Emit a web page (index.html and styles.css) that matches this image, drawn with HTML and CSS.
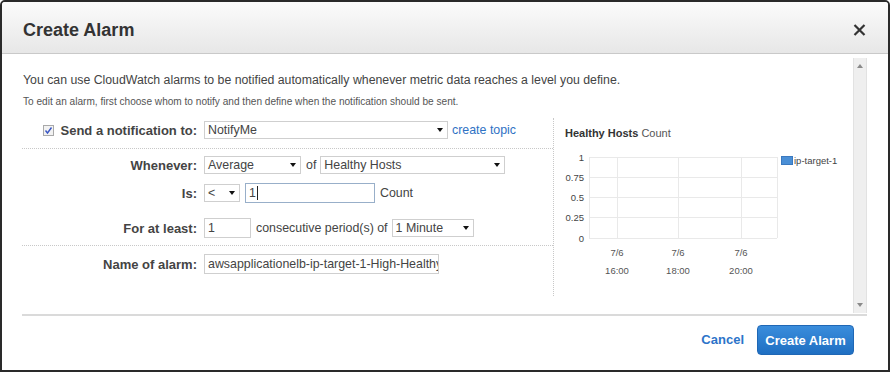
FILE: index.html
```html
<!DOCTYPE html>
<html>
<head>
<meta charset="utf-8">
<link rel="stylesheet" href="styles.css">
</head>
<body>
<div class="frame">
  <div class="header">
    <h1 class="title">Create Alarm</h1>
    <svg class="close" width="13" height="12" viewBox="0 0 13 12"><path d="M1.5 1 L11.5 11 M11.5 1 L1.5 11" stroke="#333" stroke-width="2.2" fill="none"/></svg>
  </div>
  <div class="body">
    <div class="panel">
      <div class="main">
        <p class="intro">You can use CloudWatch alarms to be notified automatically whenever metric data reaches a level you define.</p>
        <p class="hint">To edit an alarm, first choose whom to notify and then define when the notification should be sent.</p>
        <div class="split">
          <div class="form">
            <div class="section s1">
              <div class="row">
                <div class="label"><svg class="check" width="11" height="11" viewBox="0 0 11 11"><rect x="0.5" y="0.5" width="10" height="10" fill="#f2f2f2" stroke="#a9a9a9"/><path d="M2.5 5.5 L4.5 8 L8.5 2.5" stroke="#3b57c4" stroke-width="1.4" fill="none"/></svg>Send a notification to:</div>
                <div class="controls">
                  <div class="select w-notify"><span>NotifyMe</span><i class="caret"></i></div>
                  <a class="link">create topic</a>
                </div>
              </div>
            </div>
            <div class="section s2">
              <div class="row r-when">
                <div class="label">Whenever:</div>
                <div class="controls">
                  <div class="select w-avg"><span>Average</span><i class="caret"></i></div>
                  <span class="txt of">of</span>
                  <div class="select w-metric"><span>Healthy Hosts</span><i class="caret"></i></div>
                </div>
              </div>
              <div class="row r-is">
                <div class="label">Is:</div>
                <div class="controls">
                  <div class="select w-op"><span>&lt;</span><i class="caret"></i></div>
                  <div class="input w-thresh focus"><span>1</span><i class="cursor"></i></div>
                  <span class="txt">Count</span>
                </div>
              </div>
              <div class="row r-for">
                <div class="label">For at least:</div>
                <div class="controls">
                  <div class="input w-periods"><span>1</span></div>
                  <span class="txt">consecutive period(s) of</span>
                  <div class="select w-period"><span>1 Minute</span><i class="caret"></i></div>
                </div>
              </div>
            </div>
            <div class="section s3">
              <div class="row">
                <div class="label">Name of alarm:</div>
                <div class="controls">
                  <div class="input w-name"><span>awsapplicationelb-ip-target-1-High-Healthy</span></div>
                </div>
              </div>
            </div>
          </div>
          <div class="chart">
            <div class="chart-title"><b>Healthy Hosts</b> Count</div>
            <svg class="plot" width="299" height="135" viewBox="0 0 299 135">
              <g stroke="#e9e9e9" stroke-width="1" fill="none">
                <path d="M35 12.5 H223 M35 32.5 H223 M35 52.5 H223 M35 72.5 H223 M35 93.5 H223"/>
                <path d="M35.5 12 V93 M63.5 12 V93 M124.5 12 V93 M187.5 12 V93 M223.5 12 V93"/>
              </g>
              <g font-family="'Liberation Sans', Arial, sans-serif" font-size="9.5" fill="#444" text-anchor="end">
                <text x="30" y="15.5">1</text>
                <text x="30" y="35.5">0.75</text>
                <text x="30" y="55.5">0.5</text>
                <text x="30" y="75.5">0.25</text>
                <text x="30" y="96.5">0</text>
              </g>
              <g font-family="'Liberation Sans', Arial, sans-serif" font-size="9.5" fill="#555" text-anchor="middle">
                <text x="63" y="110.5">7/6</text>
                <text x="124" y="110.5">7/6</text>
                <text x="187" y="110.5">7/6</text>
                <text x="63" y="128.5">16:00</text>
                <text x="124" y="128.5">18:00</text>
                <text x="187" y="128.5">20:00</text>
              </g>
              <rect x="227.5" y="11.5" width="11" height="8" fill="#4a8fd6" stroke="#3b79bf"/>
              <text x="240" y="18.5" font-family="'Liberation Sans', Arial, sans-serif" font-size="9.5" fill="#444">ip-target-1</text>
            </svg>
          </div>
        </div>
      </div>
      <div class="scrollbar">
        <i class="arrow up"></i>
        <i class="arrow down"></i>
      </div>
    </div>
  </div>
  <div class="footer">
    <a class="cancel">Cancel</a>
    <button class="primary">Create Alarm</button>
  </div>
</div>
</body>
</html>
```

FILE: styles.css
```css
* { box-sizing: border-box; }
html, body { margin: 0; padding: 0; background: #fff; }
body {
  font-family: "Liberation Sans", Arial, sans-serif;
  font-size: 12.4px;
  color: #444;
}
.frame {
  width: 890px;
  height: 372px;
  border: 2px solid #2a2a2a;
  border-radius: 5px 5px 0 0;
  background: #fff;
  display: flex;
  flex-direction: column;
  overflow: hidden;
}
.header {
  height: 52px;
  flex: none;
  display: flex;
  align-items: center;
  justify-content: space-between;
  padding: 0 22px 0 21px;
  background: linear-gradient(#fbfbfb, #e7e7e7);
  border-bottom: 1px solid #c9c9c9;
}
.title {
  margin: 0;
  font-size: 18px;
  font-weight: bold;
  color: #333;
  line-height: 22px;
  padding-top: 4px;
}
.close { display: block; margin-top: 4px; }
.body {
  flex: none;
  padding: 0 21px 0 20px;
}
.panel {
  height: 262px;
  display: flex;
  border-bottom: 2px solid #dadada;
}
.main {
  flex: 1;
  padding-top: 18px;
}
.intro {
  margin: 0 0 0 1px;
  font-size: 12.3px;
  line-height: 16px;
  color: #444;
}
.hint {
  margin: 7px 0 10px 1px;
  font-size: 10.1px;
  line-height: 13px;
  color: #555;
}
.split {
  display: flex;
}
.form {
  width: 532px;
  flex: none;
  border-right: 1px dotted #c8c8c8;
}
.section { border-bottom: 1px dotted #c8c8c8; }
.section.s3 { border-bottom: none; }
.s1 { padding: 3px 0 9px; }
.s2 { padding: 7px 0 7px; }
.s3 { padding: 8px 0 22px; }
.row {
  display: grid;
  grid-template-columns: 175px auto;
  column-gap: 7px;
  align-items: center;
}
.r-is { margin-top: 9px; }
.r-for { margin-top: 15px; }
.label {
  justify-self: end;
  font-weight: bold;
  font-size: 13px;
  color: #444;
  display: flex;
  align-items: center;
}
.check { display: block; margin-right: 7px; }
.controls {
  display: flex;
  align-items: center;
}
.select, .input {
  display: flex;
  align-items: center;
  border: 1px solid #cfcfcf;
  background: #fff;
  color: #444;
  padding-left: 3px;
  white-space: nowrap;
  overflow: hidden;
}
.select { height: 18px; justify-content: space-between; padding-right: 4px; }
.input { height: 20px; }
.caret {
  width: 0; height: 0;
  border-left: 3.5px solid transparent;
  border-right: 3.5px solid transparent;
  border-top: 4px solid #111;
  flex: none;
}
.focus { border-color: #98afc9; }
.cursor {
  display: inline-block;
  width: 1px;
  height: 14px;
  background: #222;
  margin-left: 1px;
}
.w-notify { width: 244px; }
.w-avg { width: 97px; }
.w-metric { width: 185px; }
.w-op { width: 36px; }
.w-thresh { width: 130px; margin-left: 5px; }
.w-periods { width: 47px; }
.w-period { width: 82px; }
.w-name { width: 235px; }
.link { color: #2f72c4; margin-left: 4px; }
.txt { margin: 0 4px 0 5px; }
.of { margin: 0 4px 0 5px; }
.chart {
  flex: 1;
  padding-top: 8px;
}
.chart-title {
  padding-left: 11px;
  font-size: 11px;
  line-height: 14px;
  color: #555;
}
.chart-title b { color: #333; }
.plot { display: block; margin-top: 5px; }
.scrollbar {
  width: 14px;
  flex: none;
  margin: 4px 0 1px;
  background: #efefef;
  border-left: 1px solid #e2e2e2;
  border-right: 1px solid #e2e2e2;
  display: flex;
  flex-direction: column;
  justify-content: space-between;
  align-items: center;
  padding: 6px 0 6px;
}
.arrow {
  width: 0; height: 0;
  border-left: 3.5px solid transparent;
  border-right: 3.5px solid transparent;
}
.arrow.up { border-bottom: 4px solid #8a8a8a; }
.arrow.down { border-top: 4px solid #8a8a8a; }
.footer {
  flex: 1;
  display: flex;
  justify-content: flex-end;
  align-items: flex-start;
  padding: 9px 34px 0 0;
}
.cancel {
  color: #2c74c9;
  font-weight: bold;
  font-size: 13px;
  margin-right: 13px;
  line-height: 29px;
}
.primary {
  width: 97px;
  height: 30px;
  border: 1px solid #1f67b5;
  border-radius: 4px;
  background: linear-gradient(#3a8ddc, #1f6fc2);
  color: #fff;
  font-family: "Liberation Sans", Arial, sans-serif;
  font-weight: bold;
  font-size: 13px;
  padding: 0;
}
```
